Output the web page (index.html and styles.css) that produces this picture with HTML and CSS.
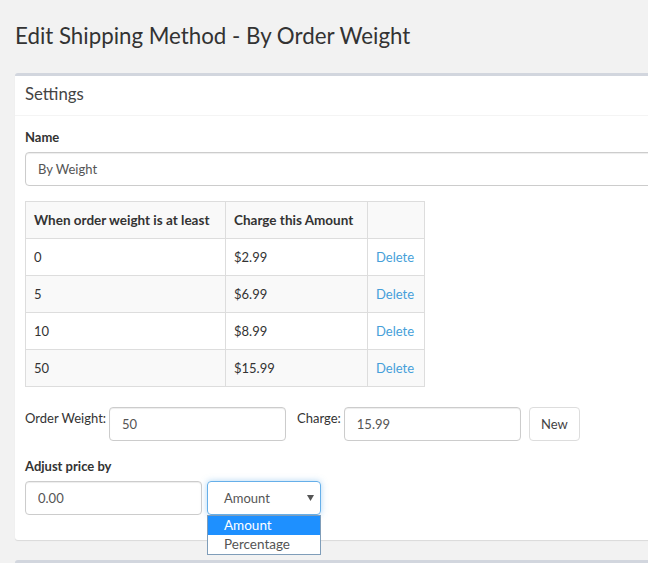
FILE: index.html
```html
<!DOCTYPE html>
<html>
<head>
<meta charset="utf-8">
<link rel="stylesheet" href="styles.css">
</head>
<body>
<div class="page">
  <h1 class="title">Edit Shipping Method - By Order Weight</h1>
  <div class="card">
    <div class="card-header">Settings</div>
    <div class="card-body">
      <div class="group">
        <label class="label">Name</label>
        <input class="input wide" type="text" value="By Weight">
      </div>
      <table class="table">
        <thead>
          <tr><th class="c1">When order weight is at least</th><th class="c2">Charge this Amount</th><th class="c3"></th></tr>
        </thead>
        <tbody>
          <tr><td>0</td><td>$2.99</td><td><a class="link">Delete</a></td></tr>
          <tr class="stripe"><td>5</td><td>$6.99</td><td><a class="link">Delete</a></td></tr>
          <tr><td>10</td><td>$8.99</td><td><a class="link">Delete</a></td></tr>
          <tr class="stripe"><td>50</td><td>$15.99</td><td><a class="link">Delete</a></td></tr>
        </tbody>
      </table>
      <div class="inline-row">
        <span class="inline-label">Order Weight:</span>
        <input class="input short" type="text" value="50">
        <span class="inline-label second">Charge:</span>
        <input class="input short" type="text" value="15.99">
        <button class="btn">New</button>
      </div>
      <div class="group last">
        <label class="label">Adjust price by</label>
        <div class="adjust-row">
          <input class="input short" type="text" value="0.00">
          <div class="select-wrap">
            <div class="select">Amount</div>
            <svg class="caret" width="7" height="7" viewBox="0 0 7 7"><path d="M0 1h7L3.5 7z" fill="#555"/></svg>
            <ul class="dropdown">
              <li class="opt active">Amount</li>
              <li class="opt">Percentage</li>
            </ul>
          </div>
        </div>
      </div>
    </div>
  </div>
  <div class="card next"></div>
</div>
</body>
</html>
```
FILE: styles.css
```css
html, body {
  margin: 0;
  padding: 0;
  background: #f2f2f2;
  overflow: hidden;
  height: 563px;
}
body {
  font-family: "Lato", "Open Sans", sans-serif;
  font-size: 13px;
  color: #333;
}
.page {
  padding: 0 0 0 15px;
  width: 760px;
}
.title {
  font-size: 22.3px;
  font-weight: 400;
  margin: 0;
  padding-top: 22px;
  line-height: 28px;
  height: 51px;
  color: #333;
}
.card {
  background: #fff;
  border-top: 3px solid #d2d6de;
  border-radius: 3px;
  box-shadow: 0 1px 1px rgba(0,0,0,0.1);
  margin-top: 0;
}
.card-header {
  font-size: 16.8px;
  line-height: 20px;
  padding: 8px 10px 11px;
  border-bottom: 1px solid #f4f4f4;
  color: #444;
}
.card-body {
  padding: 11px 10px 10px;
}
.group {
  margin-bottom: 15px;
}
.group.last {
  margin-bottom: 15px;
}
.label {
  display: block;
  font-weight: 700;
  line-height: 20px;
  margin-bottom: 5px;
}
.input {
  box-sizing: border-box;
  height: 34px;
  padding: 6px 12px;
  font: inherit;
  font-size: 13px;
  color: #555;
  border: 1px solid #ccc;
  border-radius: 4px;
  background: #fff;
  box-shadow: inset 0 1px 1px rgba(0,0,0,0.075);
}
.wide {
  width: 100%;
}
.short {
  width: 177px;
}
.table {
  border-collapse: collapse;
  width: 400px;
  margin-bottom: 20px;
}
.table th, .table td {
  border: 1px solid #ddd;
  padding: 8px;
  line-height: 20px;
  text-align: left;
  height: 20px;
}
.table th {
  font-weight: 700;
  font-size: 13.5px;
  background: #f9f9f9;
}
.c1 { width: 183px; }
.c2 { width: 125px; }
.stripe td {
  background: #f9f9f9;
}
.link {
  color: #469fd9;
  cursor: pointer;
}
.inline-row {
  display: flex;
  align-items: flex-start;
  margin-bottom: 15px;
}
.inline-label {
  line-height: 20px;
  padding-top: 1px;
  margin-right: 3px;
}
.inline-label.second {
  margin-left: 11px;
}
.btn {
  box-sizing: border-box;
  height: 34px;
  width: 51px;
  margin-left: 8px;
  font: inherit;
  font-size: 13px;
  color: #444;
  background: #fff;
  border: 1px solid #ddd;
  border-radius: 4px;
}
.adjust-row {
  display: flex;
  gap: 5px;
}
.select-wrap {
  position: relative;
  width: 114px;
}
.select {
  box-sizing: border-box;
  height: 34px;
  padding: 6px 16px;
  line-height: 20px;
  color: #555;
  border: 1px solid #66afe9;
  border-radius: 4px;
  box-shadow: 0 0 6px rgba(102,175,233,0.5);
}
.caret {
  position: absolute;
  right: 7px;
  top: 13px;
}
.dropdown {
  position: absolute;
  left: 0;
  top: 34px;
  width: 114px;
  box-sizing: border-box;
  margin: 0;
  padding: 0;
  list-style: none;
  border: 1px solid #7f9db9;
  background: #fff;
  z-index: 2;
}
.opt {
  line-height: 19px;
  padding: 0 16px;
  color: #555;
  font-size: 13.5px;
}
.opt.active {
  background: #1e90ff;
  color: #fff;
}
.card.next {
  margin-top: 20px;
  height: 40px;
}
```
